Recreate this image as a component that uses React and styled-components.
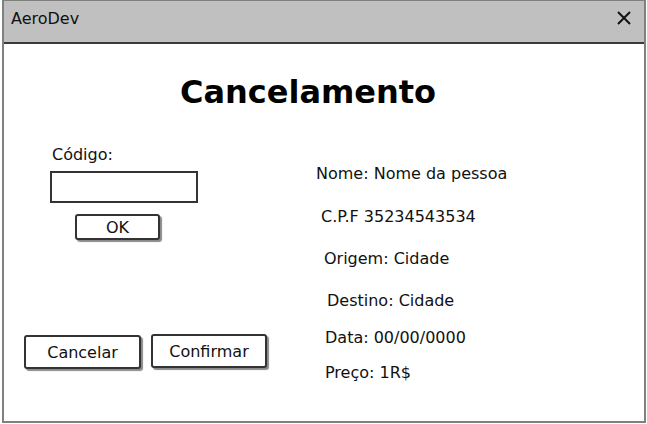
import React from 'react';
import styled, { createGlobalStyle } from 'styled-components';

const GlobalStyle = createGlobalStyle`
  html, body {
    margin: 0;
    padding: 0;
    background: #ffffff;
  }
  body {
    font-family: 'DejaVu Sans', 'Liberation Sans', sans-serif;
    color: #111;
  }
`;

const Window = styled.div`
  box-sizing: border-box;
  width: 644px;
  height: 423px;
  margin-left: 2px;
  border: 2px solid #808080;
  border-top-width: 1px;
  background: #fff;
  display: flex;
  flex-direction: column;
`;

const TitleBar = styled.div`
  box-sizing: border-box;
  height: 43px;
  background: #c0c0c0;
  border-bottom: 2px solid #3a3a3a;
  display: flex;
  align-items: center;
  justify-content: space-between;
  padding: 0 12px 7px 7px;
  font-size: 16px;
`;

const CloseIcon = () => (
  <svg width="16" height="16" viewBox="0 0 16 16">
    <path d="M2 2 L14 14 M14 2 L2 14" stroke="#111" strokeWidth="2" fill="none" />
  </svg>
);

const Heading = styled.h1`
  margin: 28px 0 0;
  padding-right: 32px;
  text-align: center;
  font-size: 32px;
  font-weight: bold;
  line-height: 40px;
  color: #000;
`;

const Body = styled.div`
  flex: 1;
  display: grid;
  grid-template-columns: 290px 1fr;
  padding: 18px 0 0 19px;
`;

const LeftColumn = styled.div`
  display: flex;
  flex-direction: column;
  align-items: flex-start;
`;

const Label = styled.label`
  font-size: 16px;
  margin: 15px 0 0 29px;
  line-height: 20px;
`;

const TextBox = styled.div`
  box-sizing: border-box;
  width: 148px;
  height: 32px;
  margin: 6px 0 0 27px;
  border: 2px solid #333;
`;

const Button = styled.button`
  box-sizing: border-box;
  width: ${(p) => p.$w}px;
  height: ${(p) => p.$h}px;
  background: #fff;
  border: 2px solid #333;
  border-radius: 3px;
  box-shadow: 2px 2px 1px #8a8a8a;
  font-family: inherit;
  font-size: 16px;
  color: #111;
  padding: 0;
  cursor: pointer;
`;

const OkRow = styled.div`
  margin: 11px 0 0 52px;
`;

const ButtonRow = styled.div`
  display: flex;
  align-items: flex-start;
  gap: 10px;
  margin-top: 95px;
  margin-left: 1px;
`;

const RightColumn = styled.div`
  display: flex;
  flex-direction: column;
  padding-top: 34px;
`;

const Info = styled.div`
  font-size: 16px;
  line-height: 20px;
  margin-left: ${(p) => p.$indent}px;
  margin-bottom: ${(p) => p.$gap}px;
`;

const details = [
  { text: 'Nome: Nome da pessoa', indent: 3, gap: 23 },
  { text: 'C.P.F 35234543534', indent: 8, gap: 22 },
  { text: 'Origem: Cidade', indent: 11, gap: 22 },
  { text: 'Destino: Cidade', indent: 14, gap: 17 },
  { text: 'Data: 00/00/0000', indent: 12, gap: 15 },
  { text: 'Preço: 1R$', indent: 12, gap: 0 },
];

export default function App() {
  return (
    <>
      <GlobalStyle />
      <Window>
        <TitleBar>
          <span>AeroDev</span>
          <CloseIcon />
        </TitleBar>
        <Heading>Cancelamento</Heading>
        <Body>
          <LeftColumn>
            <Label>Código:</Label>
            <TextBox />
            <OkRow>
              <Button $w={85} $h={26}>OK</Button>
            </OkRow>
            <ButtonRow>
              <Button $w={117} $h={34}>Cancelar</Button>
              <Button $w={116} $h={34} style={{ marginTop: -1 }}>Confirmar</Button>
            </ButtonRow>
          </LeftColumn>
          <RightColumn>
            {details.map((d) => (
              <Info key={d.text} $indent={d.indent} $gap={d.gap}>{d.text}</Info>
            ))}
          </RightColumn>
        </Body>
      </Window>
    </>
  );
}
